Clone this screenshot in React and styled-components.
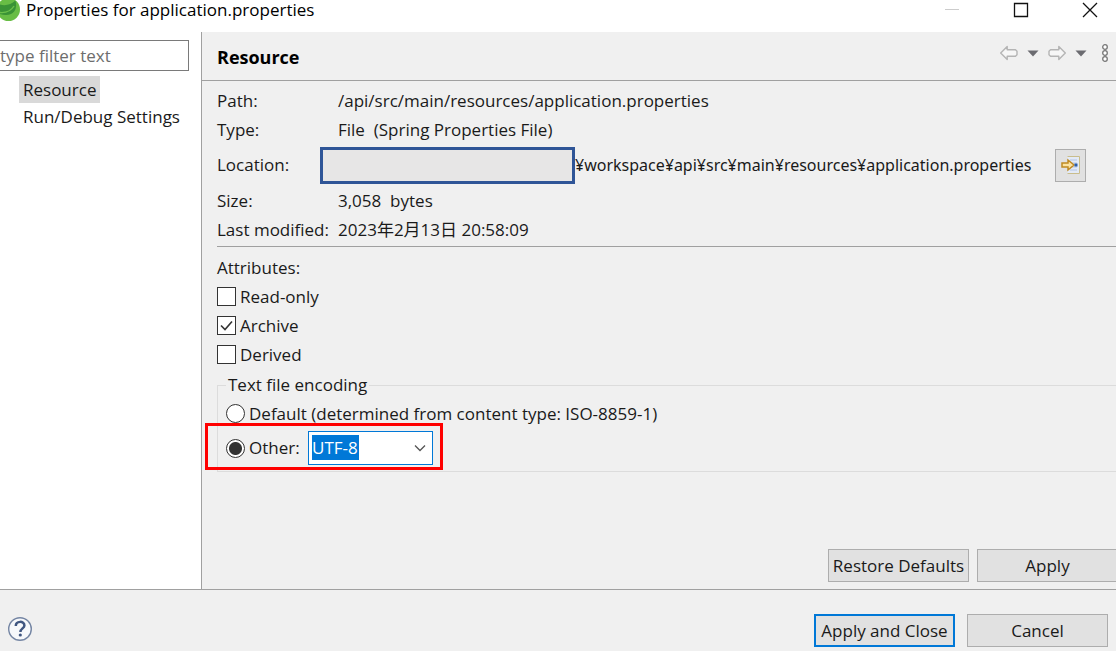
import React, { useState } from "react";
import styled, { createGlobalStyle } from "styled-components";

const GlobalStyle = createGlobalStyle`
  *, *::before, *::after { box-sizing: border-box; }
  body {
    margin: 0;
    overflow: hidden;
    background: #f0f0f0;
    color: #1a1a1a;
    font-family: "Open Sans", "Noto Sans CJK JP", sans-serif;
    font-size: 17px;
    line-height: 24px;
  }
  button, input, select { font: inherit; color: inherit; }
`;

const Dialog = styled.div`
  display: flex;
  flex-direction: column;
  min-height: 100vh;
`;

const TitleBar = styled.header`
  display: flex;
  align-items: flex-start;
  height: 32px;
  padding-right: 17px;
  background: #fff;
`;

const AppIcon = styled.svg`
  flex: none;
  width: 21px;
  height: 22px;
`;

const Title = styled.h1`
  flex: 1;
  margin: 0;
  padding-left: 5px;
  font-size: 17px;
  font-weight: 400;
  line-height: 19px;
  white-space: nowrap;
  color: #000;
`;

const WindowControls = styled.div`
  display: flex;
  gap: 51px;
`;

const IconButton = styled.button`
  display: flex;
  align-items: center;
  justify-content: center;
  width: ${(p) => p.$width || 18}px;
  height: 20px;
  padding: 0;
  border: 0;
  background: none;
  svg { display: block; flex: none; }
`;

const Body = styled.div`
  flex: 1;
  display: flex;
`;

const Sidebar = styled.aside`
  flex: none;
  width: 202px;
  padding: 8px 12px 0 0;
  border-right: 1px solid #a0a0a0;
  background: #fff;
`;

const FilterInput = styled.input`
  display: block;
  width: 100%;
  height: 31px;
  padding: 0;
  border: 1px solid #7a7a7a;
  border-left: 0;
  background: #fff;
  outline: 0;
  &::placeholder { color: #6d6d6d; opacity: 1; }
`;

const PageTree = styled.ul`
  margin: 5px 0 0;
  padding: 0 0 0 19px;
  list-style: none;
`;

const PageLink = styled.a`
  display: inline-block;
  padding: 0 4px;
  line-height: 27px;
  white-space: nowrap;
  color: inherit;
  text-decoration: none;
  vertical-align: top;
  background: ${(p) => (p.$current ? "#d9d9d9" : "none")};
`;

const Main = styled.main`
  flex: 1;
  min-width: 0;
  display: flex;
  flex-direction: column;
  overflow: hidden;
`;

const PageHeader = styled.div`
  display: flex;
  align-items: center;
  justify-content: space-between;
  height: 49px;
  padding: 0 2px 6px 15px;
  border-bottom: 1px solid #a0a0a0;
`;

const PageTitle = styled.h2`
  margin: 0;
  padding-top: 8px;
  font-size: 18px;
  font-weight: 700;
  color: #000;
`;

const NavTools = styled.div`
  display: flex;
  align-items: center;
  gap: 8px;
`;

const PageContent = styled.div`
  flex: 1;
  padding: 5px 0 0 15px;
`;

const Properties = styled.dl`
  margin: 0;
  padding-bottom: 2px;
  border-bottom: 1px solid #a0a0a0;
`;

const PropertyRow = styled.div`
  display: flex;
  align-items: center;
  height: ${(p) => (p.$tall ? 42 : 29)}px;
  white-space: pre;
`;

const PropertyName = styled.dt`
  flex: none;
  width: 121px;
`;

const PropertyValue = styled.dd`
  display: flex;
  align-items: center;
  margin: 0;
`;

const LocationValue = styled(PropertyValue)`
  font-family: "Noto Sans", "Noto Sans CJK JP", sans-serif;
  font-size: 16px;
`;

const Redaction = styled.span`
  width: 255px;
  height: 37px;
  margin-left: -18px;
  border: 3px solid #2f5597;
  background: #e7e6e6;
`;

const OpenButton = styled.button`
  display: flex;
  align-items: center;
  justify-content: center;
  width: 31px;
  height: 33px;
  margin-left: 24px;
  padding: 0;
  border: 1px solid #adadad;
  background: #e1e1e1;
`;

const Attributes = styled.section`
  padding-top: 6px;
`;

const Line = styled.div`
  line-height: 29px;
`;

const Choice = styled.label`
  display: flex;
  align-items: center;
  height: ${(p) => (p.$tall ? 40 : 29)}px;
  white-space: nowrap;
`;

const Checkbox = styled.input`
  appearance: none;
  flex: none;
  width: 19px;
  height: 19px;
  margin: 0 4px 0 0;
  border: 1px solid #333;
  background: #fff;
  &:checked {
    background: #fff
      url("data:image/svg+xml,%3Csvg xmlns='http://www.w3.org/2000/svg' viewBox='0 0 17 17'%3E%3Cpath d='M3 8.5l4 4 7-8' fill='none' stroke='%23333' stroke-width='1.6'/%3E%3C/svg%3E");
  }
`;

const Radio = styled.input`
  appearance: none;
  flex: none;
  width: 19px;
  height: 19px;
  margin: 0 4px 0 0;
  border: 1px solid #333;
  border-radius: 50%;
  background: #fff;
  &:checked { background: radial-gradient(circle, #333 6px, #fff 7px); }
`;

const Encoding = styled.fieldset`
  min-width: 0;
  margin: 2px 0 0;
  padding: 0 0 3px 8px;
  border: 1px solid #dcdcdc;
  border-right: 0;
`;

const EncodingTitle = styled.legend`
  padding: 0 2px;
  line-height: 28px;
`;

const OtherRow = styled.div`
  position: relative;
  display: flex;
  align-items: center;
  &::after {
    content: "";
    position: absolute;
    top: -5px;
    left: -21px;
    width: 238px;
    height: 47px;
    border: 3px solid #f00;
    pointer-events: none;
  }
`;

const OtherChoice = styled(Choice)`
  width: 82px;
`;

const Combo = styled.div`
  position: relative;
  svg {
    position: absolute;
    top: 13px;
    right: 7px;
    pointer-events: none;
  }
`;

const ComboSelect = styled.select`
  appearance: none;
  display: block;
  width: 125px;
  height: 34px;
  padding: 0 0 0 3px;
  border: 1px solid #0078d7;
  border-radius: 0;
  outline: 0;
  color: #fff;
  background: linear-gradient(#0078d7, #0078d7) 3px 3px / 47px 25px no-repeat #fff;
  option { color: #000; }
`;

const Actions = styled.div`
  display: flex;
  justify-content: flex-end;
  gap: ${(p) => p.$gap}px;
`;

const PageActions = styled(Actions)`
  padding-bottom: 7px;
  margin-right: -2px;
`;

const PushButton = styled.button`
  flex: none;
  width: 141px;
  height: 33px;
  padding: 0;
  border: ${(p) => (p.$primary ? "2px solid #0078d7" : "1px solid #adadad")};
  background: #e1e1e1;
  white-space: nowrap;
`;

const Footer = styled.footer`
  display: flex;
  align-items: flex-start;
  justify-content: space-between;
  padding: 24px 8px 4px 7px;
  border-top: 1px solid #a0a0a0;
`;

const HelpButton = styled(IconButton)`
  width: 26px;
  height: 29px;
`;

const Caret = () => (
  <svg width="12" height="7" viewBox="0 0 12 7">
    <path d="M0.5 0.5h11L6 6.5z" fill="#6b6b70" />
  </svg>
);

const Arrow = ({ flip }) => (
  <svg width="18" height="16" viewBox="0 0 18 16">
    <path
      d={flip ? "M17.300 8l-6.500-6.500v3.300H2.500L1 6.300v3.400l1.500 1.500h8.300v3.300z" : "M0.700 8l6.500-6.500v3.300h8.300L17 6.300v3.400l-1.500 1.500H7.200v3.300z"}
      fill="#f6f6f6"
      stroke="#b4b4b4"
      strokeWidth="1.400"
      strokeLinejoin="round"
    />
  </svg>
);

export default function App() {
  const [attributes, setAttributes] = useState({ "Read-only": false, Archive: true, Derived: false });
  const [mode, setMode] = useState("other");
  const toggle = (name) => setAttributes({ ...attributes, [name]: !attributes[name] });

  return (
    <Dialog>
      <GlobalStyle />
      <TitleBar>
        <AppIcon viewBox="0 0 21 22" aria-hidden="true">
          <circle cx="8.500" cy="9.500" r="11.500" fill="#68bd45" />
          <path d="M0 4.500C5 6 11 5 15.500 0.500c1.500 6 0.500 11-4.500 13.500-3.500 1.500-7.500 1-11 0z" fill="#3a9336" />
          <path d="M0 12.500c6 0.500 11-1.500 14-6.500" fill="none" stroke="#6cc04a" strokeWidth="1.400" />
        </AppIcon>
        <Title>Properties for application.properties</Title>
        <WindowControls>
          <IconButton aria-label="Minimize" disabled>
            <svg width="16" height="16"><path d="M1 7.500h14" stroke="#ccc" /></svg>
          </IconButton>
          <IconButton aria-label="Maximize">
            <svg width="16" height="16"><path d="M1.500 1.500h13v13h-13z" fill="none" stroke="#111" strokeWidth="1.300" /></svg>
          </IconButton>
          <IconButton aria-label="Close">
            <svg width="16" height="16"><path d="M1 1l14 14M15 1L1 15" stroke="#111" strokeWidth="1.300" /></svg>
          </IconButton>
        </WindowControls>
      </TitleBar>

      <Body>
        <Sidebar>
          <FilterInput aria-label="Filter pages" placeholder="type filter text" />
          <PageTree>
            <li><PageLink href="#resource" $current>Resource</PageLink></li>
            <li><PageLink href="#run-debug">Run/Debug Settings</PageLink></li>
          </PageTree>
        </Sidebar>

        <Main>
          <PageHeader>
            <PageTitle>Resource</PageTitle>
            <NavTools>
              <IconButton aria-label="Back"><Arrow /></IconButton>
              <IconButton aria-label="Back history" $width={14}><Caret /></IconButton>
              <IconButton aria-label="Forward"><Arrow flip /></IconButton>
              <IconButton aria-label="Forward history" $width={14}><Caret /></IconButton>
              <IconButton aria-label="View menu">
                <svg width="8" height="20" viewBox="0 0 8 20" fill="#fff" stroke="#777" strokeWidth="1.300">
                  <circle cx="4" cy="4" r="2.300" />
                  <circle cx="4" cy="10" r="2.300" />
                  <circle cx="4" cy="16" r="2.300" />
                </svg>
              </IconButton>
            </NavTools>
          </PageHeader>

          <PageContent>
            <Properties>
              <PropertyRow>
                <PropertyName>Path:</PropertyName>
                <PropertyValue>/api/src/main/resources/application.properties</PropertyValue>
              </PropertyRow>
              <PropertyRow>
                <PropertyName>Type:</PropertyName>
                <PropertyValue>{"File  (Spring Properties File)"}</PropertyValue>
              </PropertyRow>
              <PropertyRow $tall>
                <PropertyName>Location:</PropertyName>
                <LocationValue>
                  <Redaction />
                  ¥workspace¥api¥src¥main¥resources¥application.properties
                  <OpenButton aria-label="Show in system explorer">
                    <svg width="20" height="20" viewBox="0 0 20 20">
                      <path d="M6.500 1.500h12v17h-12z" fill="#e3eaf6" />
                      <path d="M6.500 1.500h12v17h-12" fill="none" stroke="#c9bd8c" />
                      <path d="M9 5h7M9 8h7M9 12h7M9 15h7" stroke="#b4c4e4" />
                      <path d="M1 8h6V5l6 5-6 5v-3H1z" fill="#fbe3a2" stroke="#c08a22" strokeWidth="1.500" />
                      <path d="M13.500 8.500h3v3h-3z" fill="#2c5ea8" />
                    </svg>
                  </OpenButton>
                </LocationValue>
              </PropertyRow>
              <PropertyRow>
                <PropertyName>Size:</PropertyName>
                <PropertyValue>{"3,058  bytes"}</PropertyValue>
              </PropertyRow>
              <PropertyRow>
                <PropertyName>Last modified:</PropertyName>
                <PropertyValue>2023年2月13日 20:58:09</PropertyValue>
              </PropertyRow>
            </Properties>

            <Attributes>
              <Line>Attributes:</Line>
              {Object.keys(attributes).map((name) => (
                <Choice key={name}>
                  <Checkbox type="checkbox" checked={attributes[name]} onChange={() => toggle(name)} />
                  {name}
                </Choice>
              ))}
            </Attributes>

            <Encoding>
              <EncodingTitle>Text file encoding</EncodingTitle>
              <Choice>
                <Radio type="radio" name="encoding" checked={mode === "default"} onChange={() => setMode("default")} />
                Default (determined from content type: ISO-8859-1)
              </Choice>
              <OtherRow>
                <OtherChoice $tall>
                  <Radio type="radio" name="encoding" checked={mode === "other"} onChange={() => setMode("other")} />
                  Other:
                </OtherChoice>
                <Combo>
                  <ComboSelect aria-label="Encoding" defaultValue="UTF-8">
                    <option>UTF-8</option>
                    <option>UTF-16</option>
                    <option>US-ASCII</option>
                  </ComboSelect>
                  <svg width="12" height="8" viewBox="0 0 12 8" aria-hidden="true">
                    <path d="M1 1.500l5 5 5-5" fill="none" stroke="#555" strokeWidth="1.300" />
                  </svg>
                </Combo>
              </OtherRow>
            </Encoding>
          </PageContent>

          <PageActions $gap={8}>
            <PushButton>Restore Defaults</PushButton>
            <PushButton>Apply</PushButton>
          </PageActions>
        </Main>
      </Body>

      <Footer>
        <HelpButton aria-label="Help">
          <svg width="26" height="26" viewBox="0 0 26 26">
            <circle cx="13" cy="13" r="11.300" fill="#f6f8fb" stroke="#7485a3" strokeWidth="1.400" />
            <path d="M8.800 10c0-5.500 8.600-5.300 8.600-.6 0 3-4 3-4 6.600" fill="none" stroke="#3f5681" strokeWidth="2.500" />
            <circle cx="13.300" cy="19" r="1.600" fill="#3f5681" />
          </svg>
        </HelpButton>
        <Actions $gap={12}>
          <PushButton $primary>Apply and Close</PushButton>
          <PushButton>Cancel</PushButton>
        </Actions>
      </Footer>
    </Dialog>
  );
}
